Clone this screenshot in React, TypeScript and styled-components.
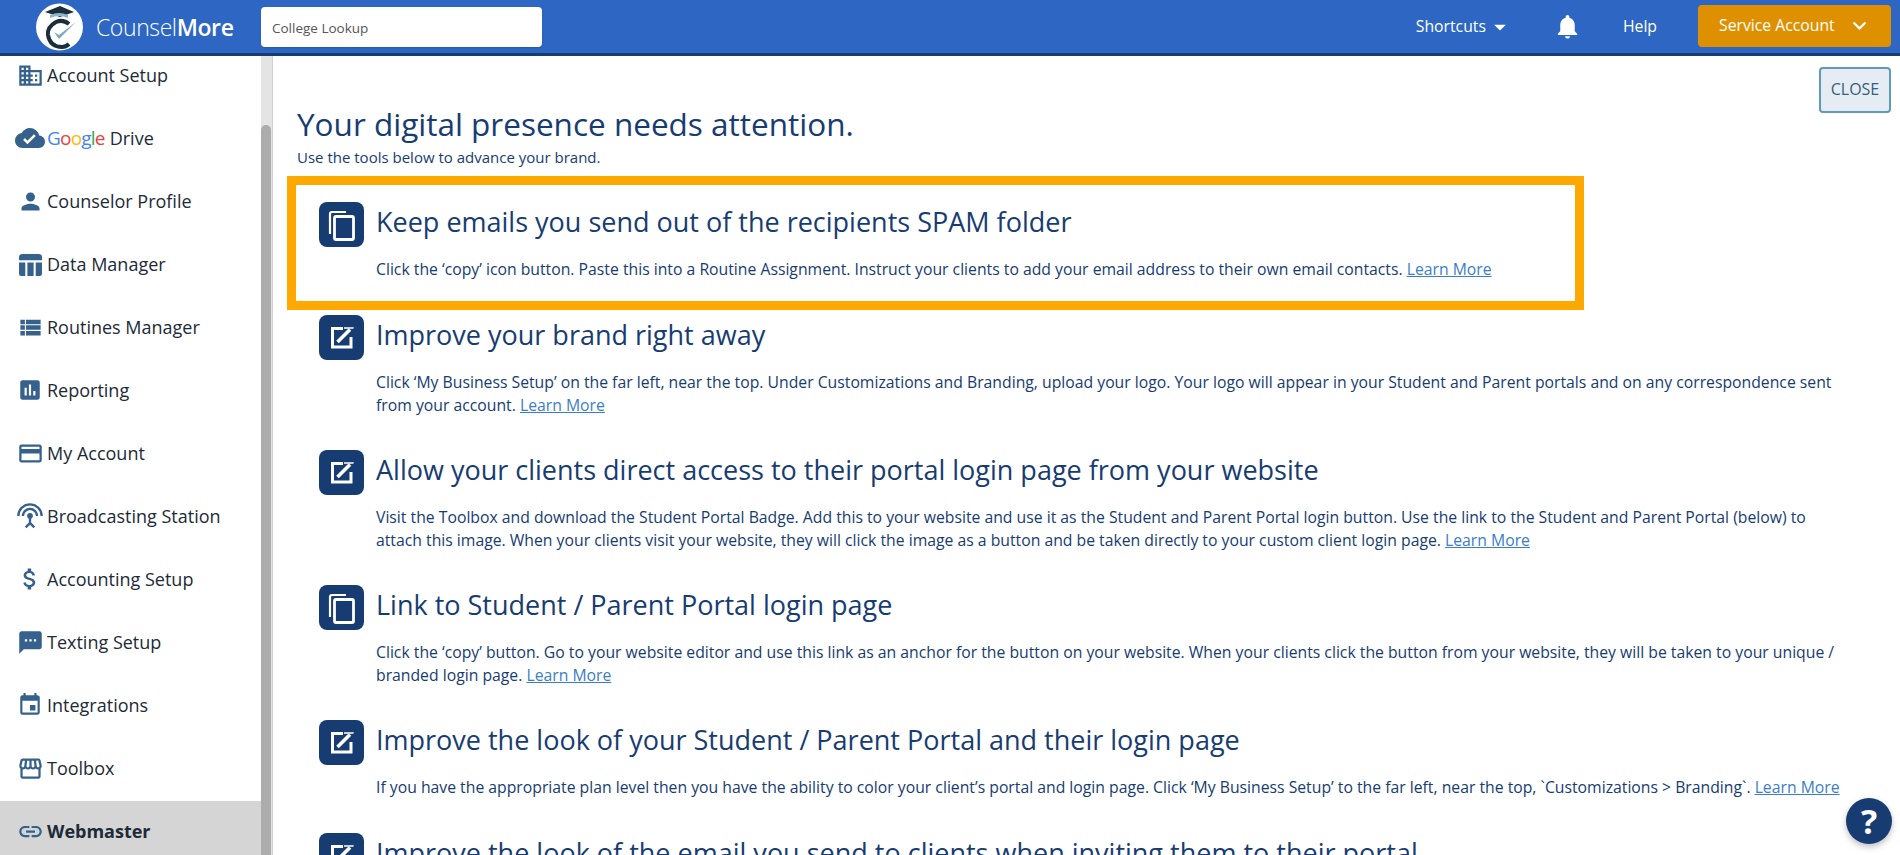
import React from "react";
import styled, { createGlobalStyle } from "styled-components";
import {
  MdBusiness, MdCloudDone, MdPerson, MdViewList, MdAssessment, MdCreditCard,
  MdSettingsInputAntenna, MdAttachMoney, MdSms, MdEvent, MdStorefront, MdLink,
  MdNotifications, MdArrowDropDown, MdKeyboardArrowDown,
} from "react-icons/md";

const Global = createGlobalStyle`
  html, body { margin: 0; padding: 0; height: 100%; overflow: hidden; background: #fff; }
  body { font-family: "Open Sans", "Liberation Sans", sans-serif; }
  * { box-sizing: border-box; }
`;

const Page = styled.div`
  width: 1900px; height: 855px; display: flex; flex-direction: column; overflow: hidden; position: relative;
`;
const Header = styled.header`
  height: 56px; flex: none; background: #2e67c3; border-bottom: 3px solid #173c72;
  display: flex; align-items: center; padding: 0 9px 0 35px;
`;
const LogoMark = styled.svg`width: 48px; height: 48px; flex: none;`;
const Brand = styled.div`
  margin-left: 13px; width: 165px; color: #fff; font-size: 23px; font-weight: 300; letter-spacing: -0.4px;
  b { font-weight: 600; }
`;
const Search = styled.div`
  width: 281px; height: 40px; background: #fff; border-radius: 4px; display: flex; align-items: center;
  padding: 2px 0 0 11px; font-size: 13.5px; color: #555; box-shadow: 0 1px 2px rgba(0,0,0,.15);
`;
const HeaderRight = styled.div`margin-left: auto; display: flex; align-items: center;`;
const NavText = styled.span`color: #fff; font-size: 15.75px; font-weight: 500; margin-top: -2px;`;
const Shortcuts = styled.div`display: flex; align-items: center; color: #fff;`;
const Bell = styled.div`display: flex; margin: 0 41px 0 39px; color: #fff;`;
const Account = styled.div`
  width: 193px; height: 42px; margin: -2px 0 0 41px; background: #de9000; border-radius: 4px; color: #fff;
  display: flex; align-items: center; justify-content: space-between; padding: 0 18px 1px 21px; font-size: 15.75px; font-weight: 500;
`;
const Body = styled.div`flex: 1; display: flex; min-height: 0;`;
const Sidebar = styled.nav`width: 261px; flex: none; overflow: hidden;`;
const NavList = styled.div`margin-top: -11px; display: flex; flex-direction: column;`;
const NavItem = styled.div<{ $active?: boolean }>`
  height: 63px; flex: none; display: flex; align-items: center; gap: 5px; padding: 0 0 3px 18px;
  font-size: 18px; line-height: 24px; color: #1d2a38; font-weight: ${p => (p.$active ? 700 : 400)};
  background: ${p => (p.$active ? "#d5d5d5" : "transparent")};
`;
const IconSlot = styled.span`
  width: 24px; height: 24px; flex: none; display: flex; align-items: center; justify-content: center; color: #35618c;
  svg { flex: none; }
`;
const GoogleWord = styled.span`font-size: 19px; font-weight: 500; letter-spacing: -0.8px; margin-right: 5px;`;
const Letter = styled.span<{ $c: string }>`color: ${p => p.$c};`;
const Scroll = styled.div`
  width: 12px; flex: none; background: #e4e4e4; border-right: 1px solid #d0d0d0; padding: 69px 1px 0 0;
`;
const Thumb = styled.div`height: 100%; background: #acacac; border-radius: 5px 5px 0 0;`;
const Main = styled.main`flex: 1; min-width: 0; padding: 50px 0 0 24px; position: relative; color: #173c72;`;
const Title = styled.h1`margin: 0; font-size: 31.5px; line-height: 36px; font-weight: 400;`;
const Sub = styled.p`margin: 6px 0 0; font-size: 15px; line-height: 19px; color: #173c72;`;
const Close = styled.button`
  position: absolute; top: 11px; right: 9px; width: 72px; height: 46px; background: #e6ecf3; border: 2px solid #5d9abc;
  border-radius: 4px; color: #34607f; font: 400 16px "Open Sans", sans-serif; padding: 0 0 2px;
`;
const Items = styled.div`margin: 9px 0 0 -10px; display: flex; flex-direction: column;`;
const Item = styled.section<{ $hi?: boolean }>`
  display: flex; gap: 12px; flex: none;
  ${p => p.$hi
    ? "width: 1297px; height: 134px; border: 9px solid #ffa900; padding: 17px 0 0 23px; margin-bottom: 5px;"
    : "padding: 0 50px 0 32px; margin-bottom: 34px;"}
`;
const IconBox = styled.div`
  width: 45px; height: 45px; flex: none; border-radius: 8px; background: #173c72; color: #fff;
  display: flex;
`;
const ItemText = styled.div`min-width: 0; flex: 1;`;
const ItemTitle = styled.h2`margin: 0; font-size: 27px; line-height: 40px; font-weight: 400; color: #173c72;`;
const ItemDesc = styled.p`margin: 16px 0 0; font-size: 15.75px; line-height: 22.5px; color: #173c72;`;
const Learn = styled.a`color: #3b7ec8; text-decoration: underline;`;
const HelpFab = styled.div`
  position: absolute; right: 8px; bottom: 11px; width: 46px; height: 46px; border-radius: 50%; background: #173c72;
  color: #fff; font-size: 34px; font-weight: 700; display: flex; align-items: center; justify-content: center;
  box-shadow: 0 3px 6px rgba(0,0,0,.25);
`;

const CopyGlyph = () => (
  <svg viewBox="0 0 45 45" width="45" height="45" fill="none" stroke="#fff">
    <path d="M11 32 V12 Q11 10 13 10 H27" strokeWidth="2.2" />
    <rect x="15.5" y="14.5" width="19" height="23" rx="1.5" strokeWidth="2.8" fill="#173c72" />
  </svg>
);
const OpenGlyph = () => (
  <svg viewBox="0 0 45 45" width="45" height="45" fill="none" stroke="#fff">
    <path d="M24 13.5 H13.5 V32 H32 V22" strokeWidth="3" />
    <path d="M18.5 27 L31 14.5" strokeWidth="3.6" />
    <path d="M25 13 H34 V13.6" strokeWidth="1.5" />
  </svg>
);
const TableGlyph = () => (
  <svg viewBox="0 0 24 24" width="25" height="25" fill="currentColor">
    <path d="M4 2 H20 Q23 2 23 5 V8 H1 V5 Q1 2 4 2 Z" />
    <path d="M1 10 H7 V23 H3 Q1 23 1 21 Z M9 10 H15 V23 H9 Z M17 10 H23 V21 Q23 23 21 23 H17 Z" />
  </svg>
);

type NavEntry = { icon: React.ReactNode; label: string; google?: boolean; active?: boolean };
const nav: NavEntry[] = [
  { icon: <MdBusiness size={27} />, label: "Account Setup" },
  { icon: <MdCloudDone size={30} />, label: "Drive", google: true },
  { icon: <MdPerson size={27} />, label: "Counselor Profile" },
  { icon: <TableGlyph />, label: "Data Manager" },
  { icon: <MdViewList size={27} />, label: "Routines Manager" },
  { icon: <MdAssessment size={26} />, label: "Reporting" },
  { icon: <MdCreditCard size={27} />, label: "My Account" },
  { icon: <MdSettingsInputAntenna size={28} />, label: "Broadcasting Station" },
  { icon: <MdAttachMoney size={28} />, label: "Accounting Setup" },
  { icon: <MdSms size={27} />, label: "Texting Setup" },
  { icon: <MdEvent size={26} />, label: "Integrations" },
  { icon: <MdStorefront size={27} />, label: "Toolbox" },
  { icon: <MdLink size={27} />, label: "Webmaster", active: true },
];

const items = [
  { copy: true, hi: true, t: "Keep emails you send out of the recipients SPAM folder", d: "Click the ‘copy’ icon button. Paste this into a Routine Assignment. Instruct your clients to add your email address to their own email contacts." },
  { t: "Improve your brand right away", d: "Click ‘My Business Setup’ on the far left, near the top. Under Customizations and Branding, upload your logo. Your logo will appear in your Student and Parent portals and on any correspondence sent from your account." },
  { t: "Allow your clients direct access to their portal login page from your website", d: "Visit the Toolbox and download the Student Portal Badge. Add this to your website and use it as the Student and Parent Portal login button. Use the link to the Student and Parent Portal (below) to attach this image. When your clients visit your website, they will click the image as a button and be taken directly to your custom client login page." },
  { copy: true, t: "Link to Student / Parent Portal login page", d: "Click the ‘copy’ button. Go to your website editor and use this link as an anchor for the button on your website. When your clients click the button from your website, they will be taken to your unique / branded login page." },
  { t: "Improve the look of your Student / Parent Portal and their login page", d: "If you have the appropriate plan level then you have the ability to color your client’s portal and login page. Click ‘My Business Setup’ to the far left, near the top, `Customizations > Branding`." },
  { t: "Improve the look of the email you send to clients when inviting them to their portal", d: "" },
];

export default function App() {
  return (
    <Page>
      <Global />
      <Header>
        <LogoMark viewBox="0 0 48 48">
          <circle cx="24.5" cy="24" r="23.5" fill="#fff" />
          <path d="M25 3 L39 9 L25 14 L10 9 Z" fill="#1b2e3c" />
          <path d="M15 12 Q24 8 33 12 L33 15 Q24 11 15 15 Z" fill="#8fb4c9" />
          <path d="M34 21 Q28 16 21 19 Q12 24 13 32 Q15 44 27 44 Q31 44 34 41" fill="none" stroke="#1b2e3c" strokeWidth="4" />
          <path d="M19 29 L24 36 L41 19 L24 32 Z" fill="#7fa8c0" />
        </LogoMark>
        <Brand>Counsel<b>More</b></Brand>
        <Search>College Lookup</Search>
        <HeaderRight>
          <Shortcuts><NavText>Shortcuts</NavText><MdArrowDropDown size={28} /></Shortcuts>
          <Bell><MdNotifications size={29} /></Bell>
          <NavText>Help</NavText>
          <Account>Service Account <MdKeyboardArrowDown size={27} /></Account>
        </HeaderRight>
      </Header>
      <Body>
        <Sidebar>
          <NavList>
            {nav.map(n => (
              <NavItem key={n.label} $active={n.active}>
                <IconSlot>{n.icon}</IconSlot>
                <span>
                  {n.google && (
                    <GoogleWord>
                      <Letter $c="#4285f4">G</Letter><Letter $c="#ea4335">o</Letter><Letter $c="#fbbc05">o</Letter>
                      <Letter $c="#4285f4">g</Letter><Letter $c="#34a853">l</Letter><Letter $c="#ea4335">e</Letter>
                    </GoogleWord>
                  )}
                  {n.label}
                </span>
              </NavItem>
            ))}
          </NavList>
        </Sidebar>
        <Scroll><Thumb /></Scroll>
        <Main>
          <Close>CLOSE</Close>
          <Title>Your digital presence needs attention.</Title>
          <Sub>Use the tools below to advance your brand.</Sub>
          <Items>
            {items.map(it => (
              <Item key={it.t} $hi={it.hi}>
                <IconBox>{it.copy ? <CopyGlyph /> : <OpenGlyph />}</IconBox>
                <ItemText>
                  <ItemTitle>{it.t}</ItemTitle>
                  {it.d && <ItemDesc>{it.d} <Learn>Learn More</Learn></ItemDesc>}
                </ItemText>
              </Item>
            ))}
          </Items>
          <HelpFab>?</HelpFab>
        </Main>
      </Body>
    </Page>
  );
}
